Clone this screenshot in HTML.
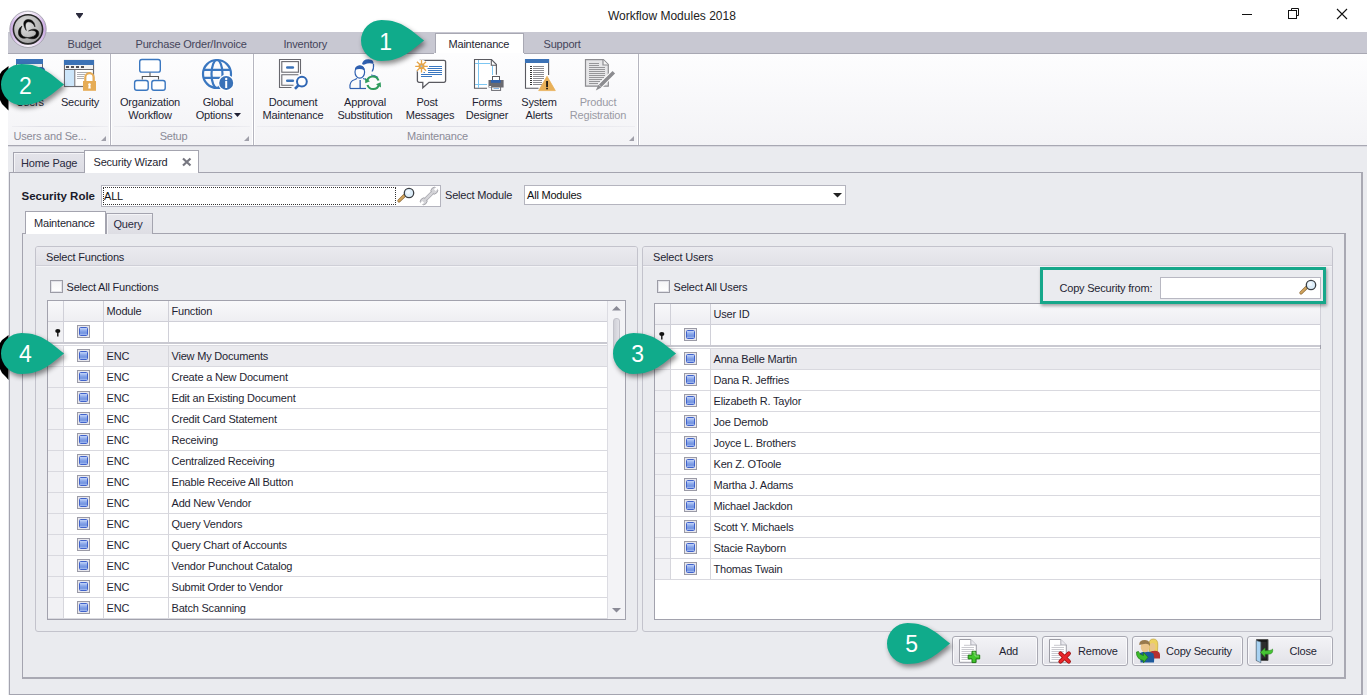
<!DOCTYPE html><html><head><meta charset="utf-8"><style>
*{box-sizing:border-box;margin:0;padding:0}
html,body{width:1367px;height:695px;overflow:hidden;background:#fff;font-family:"Liberation Sans",sans-serif;font-size:11px;color:#1f1f33}
.a{position:absolute}
.t{position:absolute;white-space:nowrap;line-height:13px;letter-spacing:-0.2px}
svg{position:absolute;overflow:visible}
</style></head><body>
<div class="t" style="left:608px;top:8px;font-size:12px;color:#222;line-height:16px;letter-spacing:0">Workflow Modules 2018</div>
<div class="a" style="left:76px;top:12.5px;width:7px;height:1px;background:#2b2b3d"></div>
<svg style="left:76px;top:14px" width="8" height="6"><path d="M0 0 L7 0 L3.5 4.8 Z" fill="#2b2b3d"/></svg>
<div class="a" style="left:1242px;top:14px;width:10px;height:1px;background:#111"></div>
<svg style="left:1288px;top:8px" width="12" height="12"><path d="M3.5 2.5 V0.5 H10.5 V7.5 H8.5" fill="none" stroke="#111" stroke-width="1"/><rect x="0.5" y="2.5" width="8" height="8" fill="none" stroke="#111" stroke-width="1"/></svg>
<svg style="left:1337px;top:9px" width="11" height="11"><path d="M0 0 L10 10 M10 0 L0 10" stroke="#111" stroke-width="1.1"/></svg>
<div class="a" style="left:8px;top:32px;width:1359px;height:22px;background:#c8c8d2;border-bottom:1px solid #a8a8b3"></div>
<div class="a" style="left:435px;top:33px;width:89px;height:21px;background:#fff;border:1px solid #a8a8b3;border-bottom:none"></div>
<div class="t" style="left:67.5px;top:38px;color:#45455a">Budget</div>
<div class="t" style="left:135.5px;top:38px;color:#45455a">Purchase Order/Invoice</div>
<div class="t" style="left:283.5px;top:38px;color:#45455a">Inventory</div>
<div class="t" style="left:543.5px;top:38px;color:#45455a">Support</div>
<div class="t" style="left:448.5px;top:38px;color:#1f1f33">Maintenance</div>
<div class="a" style="left:8px;top:54px;width:1359px;height:92px;background:linear-gradient(#fdfdfe,#f3f3f6);border-bottom:1px solid #a8a8b3"></div>
<div class="a" style="left:434px;top:53px;width:90px;height:2px;background:#fdfdfe"></div>
<div class="a" style="left:109px;top:54px;width:1px;height:91px;background:#ffffff"></div>
<div class="a" style="left:110px;top:54px;width:1px;height:91px;background:#b6b6c0"></div>
<div class="a" style="left:111px;top:54px;width:1px;height:91px;background:#ffffff"></div>
<div class="a" style="left:252px;top:54px;width:1px;height:91px;background:#ffffff"></div>
<div class="a" style="left:253px;top:54px;width:1px;height:91px;background:#b6b6c0"></div>
<div class="a" style="left:254px;top:54px;width:1px;height:91px;background:#ffffff"></div>
<div class="a" style="left:637px;top:54px;width:1px;height:91px;background:#ffffff"></div>
<div class="a" style="left:638px;top:54px;width:1px;height:91px;background:#b6b6c0"></div>
<div class="a" style="left:639px;top:54px;width:1px;height:91px;background:#ffffff"></div>
<div class="a" style="left:12px;top:126px;width:96px;height:1px;background:linear-gradient(90deg,rgba(220,220,228,0.3),#e0e0e7 30%,#e0e0e7 70%,rgba(220,220,228,0.3))"></div>
<div class="a" style="left:114px;top:126px;width:136px;height:1px;background:linear-gradient(90deg,rgba(220,220,228,0.3),#e0e0e7 30%,#e0e0e7 70%,rgba(220,220,228,0.3))"></div>
<div class="a" style="left:257px;top:126px;width:378px;height:1px;background:linear-gradient(90deg,rgba(220,220,228,0.3),#e0e0e7 30%,#e0e0e7 70%,rgba(220,220,228,0.3))"></div>
<div class="t" style="left:13.5px;top:130px;color:#8b8b97">Users and Se...</div>
<div class="t" style="left:73.5px;top:130px;width:200px;text-align:center;color:#8b8b97">Setup</div>
<div class="t" style="left:337.5px;top:130px;width:200px;text-align:center;color:#8b8b97">Maintenance</div>
<svg style="left:101px;top:136px" width="6" height="6"><path d="M5 0 V5 H0 Z" fill="#a0a0aa"/></svg>
<svg style="left:244px;top:136px" width="6" height="6"><path d="M5 0 V5 H0 Z" fill="#a0a0aa"/></svg>
<svg style="left:629px;top:136px" width="6" height="6"><path d="M5 0 V5 H0 Z" fill="#a0a0aa"/></svg>
<div class="t" style="left:-70px;top:96px;width:200px;text-align:center;color:#1f1f33">Users</div>
<div class="t" style="left:-20px;top:96px;width:200px;text-align:center;color:#1f1f33">Security</div>
<div class="t" style="left:50px;top:96px;width:200px;text-align:center;color:#1f1f33">Organization</div>
<div class="t" style="left:50px;top:109px;width:200px;text-align:center;color:#1f1f33">Workflow</div>
<div class="t" style="left:118px;top:96px;width:200px;text-align:center;color:#1f1f33">Global</div>
<div class="t" style="left:114px;top:109px;width:200px;text-align:center;color:#1f1f33">Options</div>
<div class="t" style="left:193px;top:96px;width:200px;text-align:center;color:#1f1f33">Document</div>
<div class="t" style="left:193px;top:109px;width:200px;text-align:center;color:#1f1f33">Maintenance</div>
<div class="t" style="left:265px;top:96px;width:200px;text-align:center;color:#1f1f33">Approval</div>
<div class="t" style="left:265px;top:109px;width:200px;text-align:center;color:#1f1f33">Substitution</div>
<div class="t" style="left:327px;top:96px;width:200px;text-align:center;color:#1f1f33">Post</div>
<div class="t" style="left:330px;top:109px;width:200px;text-align:center;color:#1f1f33">Messages</div>
<div class="t" style="left:387px;top:96px;width:200px;text-align:center;color:#1f1f33">Forms</div>
<div class="t" style="left:387px;top:109px;width:200px;text-align:center;color:#1f1f33">Designer</div>
<div class="t" style="left:439px;top:96px;width:200px;text-align:center;color:#1f1f33">System</div>
<div class="t" style="left:439px;top:109px;width:200px;text-align:center;color:#1f1f33">Alerts</div>
<div class="t" style="left:498px;top:96px;width:200px;text-align:center;color:#9a9aa4">Product</div>
<div class="t" style="left:498px;top:109px;width:200px;text-align:center;color:#9a9aa4">Registration</div>
<svg style="left:234px;top:113px" width="7" height="4"><path d="M0 0 H7 L3.5 4 Z" fill="#1f1f33"/></svg>
<svg style="left:10px;top:55px" width="40" height="40" viewBox="0 0 40 40"><rect x="6.5" y="8.5" width="26" height="20" fill="#fff" stroke="#6a6a70" stroke-width="1"/><rect x="6" y="4" width="27" height="5" fill="#3b72b6"/><rect x="7" y="9" width="25" height="4" fill="#f0f0f0"/><circle cx="31" cy="16" r="4" fill="#2f5fae"/></svg>
<svg style="left:60px;top:55px" width="40" height="40" viewBox="0 0 40 40"><rect x="4.5" y="5.5" width="29" height="26" fill="#fff" stroke="#6a6a70" stroke-width="1.2"/><rect x="4" y="5" width="30" height="5" fill="#3b72b6"/><rect x="5" y="10" width="28" height="4" fill="#f1f1f1"/><g fill="#505058"><rect x="6" y="11" width="3" height="2"/><rect x="11" y="11" width="3" height="2"/><rect x="16" y="11" width="3" height="2"/><rect x="21" y="11" width="3" height="2"/></g><rect x="4.8" y="14" width="28.5" height="1" fill="#6a6a70"/><rect x="5" y="15" width="9.3" height="16" fill="#cde6fa"/><rect x="14.3" y="15" width="1" height="16.5" fill="#6a6a70"/><g stroke="#9a9aa0" stroke-width="0.8"><path d="M17 17.5H31M17 19.5H25M17 21.5H24M17 23.5H24"/></g><path d="M25.3 26 V22.5 A4.2 4.4 0 0 1 33.7 22.5 V26" fill="none" stroke="#e6ac56" stroke-width="2.2"/><rect x="23" y="26" width="13" height="9.8" fill="#e6ac56"/><path d="M29.5 28.2 a1.3 1.3 0 0 1 0.9 2.3 L30.8 33.5 H28.2 L28.6 30.5 a1.3 1.3 0 0 1 0.9 -2.3Z" fill="#fff"/></svg>
<svg style="left:130px;top:55px" width="40" height="40" viewBox="0 0 40 40"><g fill="#fff" stroke="#3a77c0" stroke-width="1.4"><rect x="9.7" y="4.5" width="20.6" height="12.6" rx="2.2"/><rect x="4.6" y="25.5" width="13.6" height="9.7" rx="2.2"/><rect x="21.8" y="25.5" width="13.4" height="9.7" rx="2.2"/></g><path d="M20 17.6V21.5M12.3 24.5V21.5H28.5V24.5" fill="none" stroke="#555" stroke-width="1.1"/></svg>
<svg style="left:198px;top:55px" width="40" height="40" viewBox="0 0 40 40"><g fill="none" stroke="#3a77c0" stroke-width="2.2"><circle cx="19" cy="19" r="14"/><ellipse cx="19" cy="19" rx="5.5" ry="14"/><path d="M5.5 14.8H32.5M5.5 22.8H32.5"/></g><circle cx="28.2" cy="27.9" r="8.2" fill="#fff"/><circle cx="28.2" cy="27.9" r="7" fill="#3a72b8"/><rect x="27.2" y="26" width="2" height="7" fill="#fff"/><circle cx="28.2" cy="24" r="1.2" fill="#fff"/></svg>
<svg style="left:274px;top:55px" width="40" height="40" viewBox="0 0 40 40"><path d="M17.5 32.5H5.5V4.5H26.5V19" fill="none" stroke="#68686e" stroke-width="1.1"/><rect x="7.8" y="6.6" width="16.6" height="10.6" fill="#fff" stroke="#68686e" stroke-width="1.1"/><path d="M19.5 30.3H7.8V19.8H24.4" fill="none" stroke="#68686e" stroke-width="1.1"/><rect x="12" y="11.2" width="8.1" height="2.6" rx="1.2" fill="#3a72b8"/><rect x="12" y="24.4" width="8.1" height="2.6" rx="1.2" fill="#3a72b8"/><circle cx="27.9" cy="26.6" r="6.2" fill="#fff"/><circle cx="27.9" cy="26.6" r="4.9" fill="none" stroke="#2f66b4" stroke-width="2"/><path d="M24.3 30.3L21 33.9" stroke="#2f66b4" stroke-width="2.6"/></svg>
<svg style="left:345px;top:55px" width="40" height="40" viewBox="0 0 40 40"><g fill="none" stroke="#2f60b0" stroke-width="1.2"><path d="M27 16.5 Q29 14 28.5 9 M26 20 Q30 20 33 22.5"/><path d="M5 33.5 Q4 26 10 24.5 L12 23.5 M18 23.5 L21 24.5"/><path d="M5 33.5 H21"/><ellipse cx="14.8" cy="17" rx="4.8" ry="6.2" fill="#fff"/></g><path d="M17 9 Q18 4 23.5 4.2 Q29 4.5 28.5 9 Q24 7.5 19.5 9.5 Q18.5 10 17 9Z" fill="#2f60b0"/><path d="M10 15 Q9.5 11 14.8 10.8 Q20 11 19.6 15.5 Q15 13 10 15Z" fill="#2f60b0"/><rect x="14.5" y="25" width="1.3" height="8" fill="#2f60b0"/><g fill="none" stroke="#2e9b5d" stroke-width="2.1"><path d="M22 26 A6 6 0 0 1 33.5 25.5"/><path d="M34 29.5 A6 6 0 0 1 22.5 30"/></g><path d="M20 23 L20.3 28.3 L25 26.3Z M36 32.5 L35.7 27.3 L31 29.2Z" fill="#2e9b5d"/></svg>
<svg style="left:412px;top:55px" width="40" height="40" viewBox="0 0 40 40"><path d="M7.5 5.3H32a1.6 1.6 0 0 1 1.6 1.6V25.7a1.6 1.6 0 0 1-1.6 1.6H17L10.8 32.7V27.3H7a1.6 1.6 0 0 1-1.6-1.6V6.9" fill="#fff" stroke="#5a5a60" stroke-width="1.3"/><g stroke="#3a77c0" stroke-width="1"><path d="M17 11.5H30M14.5 13.5H30M16 15.5H30M11 17.5H13M16 17.5H30M9 19.5H30M9 21.5H20"/></g><circle cx="9.5" cy="11.3" r="6.5" fill="#fff"/><g stroke="#e6a548" stroke-width="1.3"><path d="M9.5 5V17.6M3.2 11.3H15.8M5 6.8L14 15.8M14 6.8L5 15.8"/></g><circle cx="9.5" cy="11.3" r="3" fill="#e6a548"/><circle cx="9.5" cy="11.3" r="1" fill="#9cc0e0"/></svg>
<svg style="left:470px;top:55px" width="40" height="40" viewBox="0 0 40 40"><path d="M17 33.3H4.5V4.5H21.5L26.4 9.5V19.8" fill="#fff" stroke="#5a5a60" stroke-width="1.1"/><path d="M21.3 4.5V10.2H26.4" fill="none" stroke="#5a5a60" stroke-width="1.1"/><g stroke="#7cc6f2" stroke-width="1"><path d="M8.5 5V33M5 8.5H20M5 29.5H17M22.5 11V20"/></g><rect x="22.5" y="21.5" width="7" height="4" fill="#fff" stroke="#5a5a60" stroke-width="1"/><path d="M18.5 25H33.6V32.5H18.5Z" fill="#6a6a70"/><rect x="19.5" y="25" width="13" height="4" fill="#fff" opacity="0"/><rect x="21" y="25" width="9.7" height="2.8" fill="#2f62ae"/><rect x="19.2" y="31" width="2" height="1" fill="#fff"/><rect x="21.6" y="32" width="9" height="3.4" fill="#fff" stroke="#6a6a70" stroke-width="1"/><path d="M23.5 33.5H29" stroke="#6aa0d8" stroke-width="0.8"/></svg>
<svg style="left:520px;top:55px" width="40" height="40" viewBox="0 0 40 40"><path d="M18.5 33.3H5.5V4.5H28.6V20" fill="#fff" stroke="#5a5a60" stroke-width="1.1"/><rect x="5" y="4" width="24" height="4" fill="#3b72b6"/><rect x="10" y="11" width="2" height="1" fill="#333"/><rect x="13" y="11" width="11" height="1" fill="#8a8a90"/><rect x="10" y="13" width="2" height="1" fill="#333"/><rect x="13" y="13" width="11" height="1" fill="#8a8a90"/><rect x="10" y="15" width="2" height="1" fill="#333"/><rect x="13" y="15" width="11" height="1" fill="#8a8a90"/><rect x="10" y="17" width="2" height="1" fill="#333"/><rect x="13" y="17" width="11" height="1" fill="#8a8a90"/><rect x="10" y="19" width="2" height="1" fill="#333"/><rect x="13" y="19" width="11" height="1" fill="#8a8a90"/><rect x="10" y="21" width="2" height="1" fill="#333"/><rect x="13" y="21" width="11" height="1" fill="#8a8a90"/><rect x="10" y="23" width="2" height="1" fill="#333"/><rect x="13" y="23" width="11" height="1" fill="#8a8a90"/><rect x="10" y="25" width="2" height="1" fill="#333"/><rect x="13" y="25" width="9" height="1" fill="#8a8a90"/><rect x="10" y="27" width="2" height="1" fill="#333"/><rect x="13" y="27" width="9" height="1" fill="#8a8a90"/><rect x="10" y="29" width="2" height="1" fill="#333"/><rect x="13" y="29" width="9" height="1" fill="#8a8a90"/><path d="M27 21.3L35.3 35.6H18.7Z" fill="#e8b058" stroke="#e8b058" stroke-width="0.8" stroke-linejoin="round"/><rect x="26.2" y="26" width="1.7" height="6" fill="#111"/><rect x="26.2" y="32.8" width="1.7" height="1.5" fill="#111"/></svg>
<svg style="left:580px;top:55px" width="40" height="40" viewBox="0 0 40 40"><path d="M5.5 4.7H23.4L28.3 9.6V31.2H5.5Z" fill="#e6e6e8" stroke="#8c8c90" stroke-width="1.2"/><path d="M23 4.7V10H28.3" fill="#f4f4f4" stroke="#8c8c90" stroke-width="1.2"/><g stroke="#8c8c90" stroke-width="0.9"><path d="M9 8.5H19M9 10.5H19M9 12.5H25M9 14.5H25M9 16.5H25M9 18.5H25M9 20.5H25M9 22.5H24M9 24.5H22M9 26.5H20M9 28.5H18"/></g><path d="M33.8 17.2L20 31" stroke="#fff" stroke-width="5.5"/><path d="M33.8 17.2L20.2 30.8" stroke="#8c8c90" stroke-width="3.6"/><path d="M18.4 29.7L21.4 32.6L15.8 35.4Z" fill="#8c8c90"/></svg>
<svg style="left:8px;top:9px" width="40" height="40" viewBox="0 0 40 40"><defs><radialGradient id="lg1" cx="0.4" cy="0.35" r="0.7"><stop offset="0" stop-color="#e2e2e2"/><stop offset="0.6" stop-color="#bcbcbc"/><stop offset="1" stop-color="#9a9a9a"/></radialGradient><linearGradient id="lg2" x1="0" y1="0" x2="1" y2="0"><stop offset="0" stop-color="#c8a6e2"/><stop offset="0.2" stop-color="#e6d6f2"/><stop offset="0.5" stop-color="#faf6fc"/><stop offset="0.8" stop-color="#e4d2f0"/><stop offset="1" stop-color="#c6a4e0"/></linearGradient></defs><circle cx="20" cy="20.3" r="18.2" fill="url(#lg2)" stroke="#a2a2aa" stroke-width="0.9"/><circle cx="20" cy="20.3" r="14.6" fill="url(#lg1)" stroke="#262626" stroke-width="1.6"/><g fill="#0a0a0a" stroke="#0a0a0a" stroke-width="0.5"><path d="M18.3 21.5 C14.5 16 15 11 19.5 10.5 C24 10 27 13.5 27 18 C25.5 14.5 23 12.8 20.5 12.8 C17.5 13 16.6 16.5 18.3 21.5Z"/><path d="M14 17 C10.3 19 9.6 24 11.3 26.9 C13 29.5 17 29.9 19.5 28.5 C16.5 28.3 13.8 27.3 13 24.8 C12.3 22 12.8 19.5 14 17Z"/><path d="M20.5 22 C23 20.2 27 19.3 29.6 21.4 C31.8 23.5 30.8 27.4 28.1 28.9 C25.5 30.3 22 29.9 19.3 28.8 C22 28.3 25.3 27.8 27 26.4 C28.7 25 28.6 22.6 26.8 21.9 C24.8 21.1 22.5 21.2 20.5 22Z"/></g></svg>
<div class="a" style="left:8px;top:146px;width:1359px;height:549px;background:#eaebef"></div>
<div class="a" style="left:8px;top:146px;width:1359px;height:1px;background:#d9d9e0"></div>
<div class="a" style="left:13px;top:152px;width:72px;height:21px;background:linear-gradient(#e4e4ea,#dcdce3);border:1px solid #a4a4af;border-bottom:none;box-shadow:inset 1px 1px 0 #f4f4f7"></div>
<div class="t" style="left:21px;top:157px;color:#2a2a3e">Home Page</div>
<div class="a" style="left:9px;top:172px;width:1354px;height:523px;background:#eaebef;border:1px solid #a4a4af;border-right:2px solid #a9a9b3"></div>
<div class="a" style="left:84px;top:150px;width:115px;height:23px;background:#fff;border:1px solid #a4a4af;border-bottom:none"></div>
<div class="t" style="left:93.5px;top:155.5px;color:#1f1f33">Security Wizard</div>
<svg style="left:182px;top:158px" width="10" height="8"><path d="M1 0.5 L8.5 7.5 M8.5 0.5 L1 7.5" stroke="#777780" stroke-width="2.2"/></svg>
<div class="t" style="left:21.5px;top:190px;font-weight:bold;font-size:11.5px;color:#1a1a2a;letter-spacing:0">Security Role</div>
<div class="a" style="left:101px;top:185px;width:340px;height:22px;background:#fff;border:1px solid #b4b4be"></div>
<div class="a" style="left:103px;top:187px;width:293px;height:18px;border:1px dotted #333"></div>
<div class="t" style="left:104px;top:189.5px;color:#111">ALL</div>
<div class="t" style="left:445px;top:189px;color:#1f1f33">Select Module</div>
<div class="a" style="left:524px;top:185px;width:322px;height:20px;background:#fff;border:1px solid #b4b4be"></div>
<div class="t" style="left:527px;top:189px;color:#111">All Modules</div>
<svg style="left:833px;top:193px" width="9" height="5"><path d="M0 0 H9 L4.5 4.5 Z" fill="#222"/></svg>
<div class="a" style="left:22px;top:233px;width:1324px;height:446px;background:#eaebef;border:1px solid #a4a4af;border-right:2px solid #a9a9b3;border-bottom:2px solid #a9a9b3"></div>
<div class="a" style="left:106px;top:213px;width:47px;height:21px;background:linear-gradient(#e8e8ed,#dedee4);border:1px solid #a4a4af;border-bottom:none;box-shadow:inset 1px 1px 0 #f4f4f7"></div>
<div class="t" style="left:113.5px;top:217.5px;color:#2a2a3e">Query</div>
<div class="a" style="left:25px;top:211px;width:81px;height:23px;background:#fff;border:1px solid #a4a4af;border-bottom:none"></div>
<div class="t" style="left:34px;top:217px;color:#1f1f33">Maintenance</div>
<div class="a" style="left:35px;top:246px;width:603px;height:386px;background:#eaebef;border:1px solid #c3c3cc;border-radius:3px"></div>
<div class="a" style="left:36px;top:247px;width:601px;height:19px;background:linear-gradient(#eaeaef,#e1e1e7);border-bottom:1px solid #cfcfd7;border-radius:2px 2px 0 0"></div>
<div class="a" style="left:36px;top:266px;width:601px;height:1px;background:#f4f4f7"></div>
<div class="t" style="left:46px;top:251px;color:#1f1f33">Select Functions</div>
<div class="a" style="left:642px;top:246px;width:691px;height:386px;background:#eaebef;border:1px solid #c3c3cc;border-radius:3px"></div>
<div class="a" style="left:643px;top:247px;width:689px;height:19px;background:linear-gradient(#eaeaef,#e1e1e7);border-bottom:1px solid #cfcfd7;border-radius:2px 2px 0 0"></div>
<div class="a" style="left:643px;top:266px;width:689px;height:1px;background:#f4f4f7"></div>
<div class="t" style="left:653px;top:251px;color:#1f1f33">Select Users</div>
<div class="a" style="left:50px;top:280px;width:13px;height:13px;background:linear-gradient(#f4f4f6,#fff);border:1px solid #9c9ca6;box-shadow:inset 0 0 0 1px #e2e2e8"></div>
<div class="t" style="left:66.5px;top:280.5px;color:#1f1f33">Select All Functions</div>
<div class="a" style="left:657px;top:280px;width:13px;height:13px;background:linear-gradient(#f4f4f6,#fff);border:1px solid #9c9ca6;box-shadow:inset 0 0 0 1px #e2e2e8"></div>
<div class="t" style="left:673.5px;top:280.5px;color:#1f1f33">Select All Users</div>
<div class="a" style="left:47px;top:300px;width:579px;height:320px;background:#fff;border:1px solid #a2a2ad"></div>
<div class="a" style="left:48px;top:301px;width:559px;height:20px;background:linear-gradient(#f8f8fa,#eeeef2)"></div>
<div class="a" style="left:48px;top:321px;width:559px;height:1px;background:#cfcfd7"></div>
<div class="a" style="left:48px;top:342px;width:559px;height:2px;background:#c9c9d1"></div>
<div class="a" style="left:48px;top:344px;width:559px;height:1px;background:#fff"></div>
<div class="a" style="left:48px;top:345px;width:559px;height:1px;background:#dadae0"></div>
<div class="a" style="left:48px;top:322px;width:15px;height:20px;background:#f1f1f4"></div>
<div class="a" style="left:48px;top:346px;width:15px;height:272px;background:#f1f1f4"></div>
<div class="a" style="left:104px;top:346px;width:503px;height:20px;background:#ebebef"></div>
<div class="a" style="left:48px;top:366px;width:559px;height:1px;background:#d9d9df"></div>
<div class="a" style="left:48px;top:387px;width:559px;height:1px;background:#d9d9df"></div>
<div class="a" style="left:48px;top:408px;width:559px;height:1px;background:#d9d9df"></div>
<div class="a" style="left:48px;top:429px;width:559px;height:1px;background:#d9d9df"></div>
<div class="a" style="left:48px;top:450px;width:559px;height:1px;background:#d9d9df"></div>
<div class="a" style="left:48px;top:471px;width:559px;height:1px;background:#d9d9df"></div>
<div class="a" style="left:48px;top:492px;width:559px;height:1px;background:#d9d9df"></div>
<div class="a" style="left:48px;top:513px;width:559px;height:1px;background:#d9d9df"></div>
<div class="a" style="left:48px;top:534px;width:559px;height:1px;background:#d9d9df"></div>
<div class="a" style="left:48px;top:555px;width:559px;height:1px;background:#d9d9df"></div>
<div class="a" style="left:48px;top:576px;width:559px;height:1px;background:#d9d9df"></div>
<div class="a" style="left:48px;top:597px;width:559px;height:1px;background:#d9d9df"></div>
<div class="a" style="left:48px;top:618px;width:559px;height:1px;background:#d9d9df"></div>
<div class="a" style="left:63px;top:301px;width:1px;height:41px;background:#d0d0d8"></div>
<div class="a" style="left:63px;top:346px;width:1px;height:272px;background:#d6d6dc"></div>
<div class="a" style="left:103px;top:301px;width:1px;height:41px;background:#d0d0d8"></div>
<div class="a" style="left:103px;top:346px;width:1px;height:272px;background:#d6d6dc"></div>
<div class="a" style="left:168px;top:301px;width:1px;height:41px;background:#d0d0d8"></div>
<div class="a" style="left:168px;top:346px;width:1px;height:272px;background:#d6d6dc"></div>
<svg style="left:55px;top:329px" width="6" height="8"><ellipse cx="2.8" cy="2" rx="2.6" ry="1.9" fill="#111"/><rect x="2.1" y="3" width="1.4" height="4.5" fill="#111"/></svg>
<div class="t" style="left:106.5px;top:305px;">Module</div>
<div class="t" style="left:171.5px;top:305px;">Function</div>
<div class="a" style="left:77px;top:325px;width:13px;height:13px;background:#8a8a96;border:1px solid #9a9aa6;padding:1px"></div>
<div class="a" style="left:78px;top:326px;width:11px;height:11px;background:#e8e8ee"></div>
<div class="a" style="left:79px;top:327px;width:9px;height:9px;background:linear-gradient(#c2d3f8,#86a4e8 45%,#7394e0 75%,#a9bff2);border:1px solid #3f62cc;border-radius:1.5px"></div>
<div class="a" style="left:77px;top:349px;width:13px;height:13px;background:#8a8a96;border:1px solid #9a9aa6;padding:1px"></div>
<div class="a" style="left:78px;top:350px;width:11px;height:11px;background:#e8e8ee"></div>
<div class="a" style="left:79px;top:351px;width:9px;height:9px;background:linear-gradient(#c2d3f8,#86a4e8 45%,#7394e0 75%,#a9bff2);border:1px solid #3f62cc;border-radius:1.5px"></div>
<div class="t" style="left:106.5px;top:350px;">ENC</div>
<div class="t" style="left:171.5px;top:350px;">View My Documents</div>
<div class="a" style="left:77px;top:370px;width:13px;height:13px;background:#8a8a96;border:1px solid #9a9aa6;padding:1px"></div>
<div class="a" style="left:78px;top:371px;width:11px;height:11px;background:#e8e8ee"></div>
<div class="a" style="left:79px;top:372px;width:9px;height:9px;background:linear-gradient(#c2d3f8,#86a4e8 45%,#7394e0 75%,#a9bff2);border:1px solid #3f62cc;border-radius:1.5px"></div>
<div class="t" style="left:106.5px;top:371px;">ENC</div>
<div class="t" style="left:171.5px;top:371px;">Create a New Document</div>
<div class="a" style="left:77px;top:391px;width:13px;height:13px;background:#8a8a96;border:1px solid #9a9aa6;padding:1px"></div>
<div class="a" style="left:78px;top:392px;width:11px;height:11px;background:#e8e8ee"></div>
<div class="a" style="left:79px;top:393px;width:9px;height:9px;background:linear-gradient(#c2d3f8,#86a4e8 45%,#7394e0 75%,#a9bff2);border:1px solid #3f62cc;border-radius:1.5px"></div>
<div class="t" style="left:106.5px;top:392px;">ENC</div>
<div class="t" style="left:171.5px;top:392px;">Edit an Existing Document</div>
<div class="a" style="left:77px;top:412px;width:13px;height:13px;background:#8a8a96;border:1px solid #9a9aa6;padding:1px"></div>
<div class="a" style="left:78px;top:413px;width:11px;height:11px;background:#e8e8ee"></div>
<div class="a" style="left:79px;top:414px;width:9px;height:9px;background:linear-gradient(#c2d3f8,#86a4e8 45%,#7394e0 75%,#a9bff2);border:1px solid #3f62cc;border-radius:1.5px"></div>
<div class="t" style="left:106.5px;top:413px;">ENC</div>
<div class="t" style="left:171.5px;top:413px;">Credit Card Statement</div>
<div class="a" style="left:77px;top:433px;width:13px;height:13px;background:#8a8a96;border:1px solid #9a9aa6;padding:1px"></div>
<div class="a" style="left:78px;top:434px;width:11px;height:11px;background:#e8e8ee"></div>
<div class="a" style="left:79px;top:435px;width:9px;height:9px;background:linear-gradient(#c2d3f8,#86a4e8 45%,#7394e0 75%,#a9bff2);border:1px solid #3f62cc;border-radius:1.5px"></div>
<div class="t" style="left:106.5px;top:434px;">ENC</div>
<div class="t" style="left:171.5px;top:434px;">Receiving</div>
<div class="a" style="left:77px;top:454px;width:13px;height:13px;background:#8a8a96;border:1px solid #9a9aa6;padding:1px"></div>
<div class="a" style="left:78px;top:455px;width:11px;height:11px;background:#e8e8ee"></div>
<div class="a" style="left:79px;top:456px;width:9px;height:9px;background:linear-gradient(#c2d3f8,#86a4e8 45%,#7394e0 75%,#a9bff2);border:1px solid #3f62cc;border-radius:1.5px"></div>
<div class="t" style="left:106.5px;top:455px;">ENC</div>
<div class="t" style="left:171.5px;top:455px;">Centralized Receiving</div>
<div class="a" style="left:77px;top:475px;width:13px;height:13px;background:#8a8a96;border:1px solid #9a9aa6;padding:1px"></div>
<div class="a" style="left:78px;top:476px;width:11px;height:11px;background:#e8e8ee"></div>
<div class="a" style="left:79px;top:477px;width:9px;height:9px;background:linear-gradient(#c2d3f8,#86a4e8 45%,#7394e0 75%,#a9bff2);border:1px solid #3f62cc;border-radius:1.5px"></div>
<div class="t" style="left:106.5px;top:476px;">ENC</div>
<div class="t" style="left:171.5px;top:476px;">Enable Receive All Button</div>
<div class="a" style="left:77px;top:496px;width:13px;height:13px;background:#8a8a96;border:1px solid #9a9aa6;padding:1px"></div>
<div class="a" style="left:78px;top:497px;width:11px;height:11px;background:#e8e8ee"></div>
<div class="a" style="left:79px;top:498px;width:9px;height:9px;background:linear-gradient(#c2d3f8,#86a4e8 45%,#7394e0 75%,#a9bff2);border:1px solid #3f62cc;border-radius:1.5px"></div>
<div class="t" style="left:106.5px;top:497px;">ENC</div>
<div class="t" style="left:171.5px;top:497px;">Add New Vendor</div>
<div class="a" style="left:77px;top:517px;width:13px;height:13px;background:#8a8a96;border:1px solid #9a9aa6;padding:1px"></div>
<div class="a" style="left:78px;top:518px;width:11px;height:11px;background:#e8e8ee"></div>
<div class="a" style="left:79px;top:519px;width:9px;height:9px;background:linear-gradient(#c2d3f8,#86a4e8 45%,#7394e0 75%,#a9bff2);border:1px solid #3f62cc;border-radius:1.5px"></div>
<div class="t" style="left:106.5px;top:518px;">ENC</div>
<div class="t" style="left:171.5px;top:518px;">Query Vendors</div>
<div class="a" style="left:77px;top:538px;width:13px;height:13px;background:#8a8a96;border:1px solid #9a9aa6;padding:1px"></div>
<div class="a" style="left:78px;top:539px;width:11px;height:11px;background:#e8e8ee"></div>
<div class="a" style="left:79px;top:540px;width:9px;height:9px;background:linear-gradient(#c2d3f8,#86a4e8 45%,#7394e0 75%,#a9bff2);border:1px solid #3f62cc;border-radius:1.5px"></div>
<div class="t" style="left:106.5px;top:539px;">ENC</div>
<div class="t" style="left:171.5px;top:539px;">Query Chart of Accounts</div>
<div class="a" style="left:77px;top:559px;width:13px;height:13px;background:#8a8a96;border:1px solid #9a9aa6;padding:1px"></div>
<div class="a" style="left:78px;top:560px;width:11px;height:11px;background:#e8e8ee"></div>
<div class="a" style="left:79px;top:561px;width:9px;height:9px;background:linear-gradient(#c2d3f8,#86a4e8 45%,#7394e0 75%,#a9bff2);border:1px solid #3f62cc;border-radius:1.5px"></div>
<div class="t" style="left:106.5px;top:560px;">ENC</div>
<div class="t" style="left:171.5px;top:560px;">Vendor Punchout Catalog</div>
<div class="a" style="left:77px;top:580px;width:13px;height:13px;background:#8a8a96;border:1px solid #9a9aa6;padding:1px"></div>
<div class="a" style="left:78px;top:581px;width:11px;height:11px;background:#e8e8ee"></div>
<div class="a" style="left:79px;top:582px;width:9px;height:9px;background:linear-gradient(#c2d3f8,#86a4e8 45%,#7394e0 75%,#a9bff2);border:1px solid #3f62cc;border-radius:1.5px"></div>
<div class="t" style="left:106.5px;top:581px;">ENC</div>
<div class="t" style="left:171.5px;top:581px;">Submit Order to Vendor</div>
<div class="a" style="left:77px;top:601px;width:13px;height:13px;background:#8a8a96;border:1px solid #9a9aa6;padding:1px"></div>
<div class="a" style="left:78px;top:602px;width:11px;height:11px;background:#e8e8ee"></div>
<div class="a" style="left:79px;top:603px;width:9px;height:9px;background:linear-gradient(#c2d3f8,#86a4e8 45%,#7394e0 75%,#a9bff2);border:1px solid #3f62cc;border-radius:1.5px"></div>
<div class="t" style="left:106.5px;top:602px;">ENC</div>
<div class="t" style="left:171.5px;top:602px;">Batch Scanning</div>
<div class="a" style="left:607px;top:301px;width:18px;height:318px;background:#f3f3f6;border-left:1px solid #dcdce2"></div>
<svg style="left:612px;top:306px" width="9" height="5"><path d="M0 4.5 H9 L4.5 0 Z" fill="#8a8a96"/></svg>
<svg style="left:612px;top:608px" width="9" height="5"><path d="M0 0 H9 L4.5 4.5 Z" fill="#8a8a96"/></svg>
<div class="a" style="left:613px;top:318px;width:7px;height:36px;background:linear-gradient(90deg,#cfcfd6,#e2e2e8);border:1px solid #c2c2ca;border-radius:3px"></div>
<div class="a" style="left:654px;top:303px;width:667px;height:317px;background:#fff;border:1px solid #a2a2ad"></div>
<div class="a" style="left:655px;top:304px;width:665px;height:20px;background:linear-gradient(#f8f8fa,#eeeef2)"></div>
<div class="a" style="left:655px;top:324px;width:665px;height:1px;background:#cfcfd7"></div>
<div class="a" style="left:655px;top:345px;width:665px;height:2px;background:#c9c9d1"></div>
<div class="a" style="left:655px;top:347px;width:665px;height:1px;background:#fff"></div>
<div class="a" style="left:655px;top:348px;width:665px;height:1px;background:#dadae0"></div>
<div class="a" style="left:655px;top:325px;width:15px;height:20px;background:#f1f1f4"></div>
<div class="a" style="left:655px;top:349px;width:15px;height:230px;background:#f1f1f4"></div>
<div class="a" style="left:711px;top:349px;width:609px;height:20px;background:#ebebef"></div>
<div class="a" style="left:655px;top:369px;width:665px;height:1px;background:#d9d9df"></div>
<div class="a" style="left:655px;top:390px;width:665px;height:1px;background:#d9d9df"></div>
<div class="a" style="left:655px;top:411px;width:665px;height:1px;background:#d9d9df"></div>
<div class="a" style="left:655px;top:432px;width:665px;height:1px;background:#d9d9df"></div>
<div class="a" style="left:655px;top:453px;width:665px;height:1px;background:#d9d9df"></div>
<div class="a" style="left:655px;top:474px;width:665px;height:1px;background:#d9d9df"></div>
<div class="a" style="left:655px;top:495px;width:665px;height:1px;background:#d9d9df"></div>
<div class="a" style="left:655px;top:516px;width:665px;height:1px;background:#d9d9df"></div>
<div class="a" style="left:655px;top:537px;width:665px;height:1px;background:#d9d9df"></div>
<div class="a" style="left:655px;top:558px;width:665px;height:1px;background:#d9d9df"></div>
<div class="a" style="left:655px;top:579px;width:665px;height:1px;background:#d9d9df"></div>
<div class="a" style="left:670px;top:304px;width:1px;height:41px;background:#d0d0d8"></div>
<div class="a" style="left:670px;top:349px;width:1px;height:230px;background:#d6d6dc"></div>
<div class="a" style="left:710px;top:304px;width:1px;height:41px;background:#d0d0d8"></div>
<div class="a" style="left:710px;top:349px;width:1px;height:230px;background:#d6d6dc"></div>
<div class="a" style="left:1320px;top:304px;width:1px;height:41px;background:#d0d0d8"></div>
<div class="a" style="left:1320px;top:349px;width:1px;height:230px;background:#d6d6dc"></div>
<svg style="left:659px;top:332px" width="6" height="8"><ellipse cx="2.8" cy="2" rx="2.6" ry="1.9" fill="#111"/><rect x="2.1" y="3" width="1.4" height="4.5" fill="#111"/></svg>
<div class="t" style="left:713.5px;top:308px;">User ID</div>
<div class="a" style="left:684px;top:328px;width:13px;height:13px;background:#8a8a96;border:1px solid #9a9aa6;padding:1px"></div>
<div class="a" style="left:685px;top:329px;width:11px;height:11px;background:#e8e8ee"></div>
<div class="a" style="left:686px;top:330px;width:9px;height:9px;background:linear-gradient(#c2d3f8,#86a4e8 45%,#7394e0 75%,#a9bff2);border:1px solid #3f62cc;border-radius:1.5px"></div>
<div class="a" style="left:684px;top:352px;width:13px;height:13px;background:#8a8a96;border:1px solid #9a9aa6;padding:1px"></div>
<div class="a" style="left:685px;top:353px;width:11px;height:11px;background:#e8e8ee"></div>
<div class="a" style="left:686px;top:354px;width:9px;height:9px;background:linear-gradient(#c2d3f8,#86a4e8 45%,#7394e0 75%,#a9bff2);border:1px solid #3f62cc;border-radius:1.5px"></div>
<div class="t" style="left:713.5px;top:353px;">Anna Belle Martin</div>
<div class="a" style="left:684px;top:373px;width:13px;height:13px;background:#8a8a96;border:1px solid #9a9aa6;padding:1px"></div>
<div class="a" style="left:685px;top:374px;width:11px;height:11px;background:#e8e8ee"></div>
<div class="a" style="left:686px;top:375px;width:9px;height:9px;background:linear-gradient(#c2d3f8,#86a4e8 45%,#7394e0 75%,#a9bff2);border:1px solid #3f62cc;border-radius:1.5px"></div>
<div class="t" style="left:713.5px;top:374px;">Dana R. Jeffries</div>
<div class="a" style="left:684px;top:394px;width:13px;height:13px;background:#8a8a96;border:1px solid #9a9aa6;padding:1px"></div>
<div class="a" style="left:685px;top:395px;width:11px;height:11px;background:#e8e8ee"></div>
<div class="a" style="left:686px;top:396px;width:9px;height:9px;background:linear-gradient(#c2d3f8,#86a4e8 45%,#7394e0 75%,#a9bff2);border:1px solid #3f62cc;border-radius:1.5px"></div>
<div class="t" style="left:713.5px;top:395px;">Elizabeth R. Taylor</div>
<div class="a" style="left:684px;top:415px;width:13px;height:13px;background:#8a8a96;border:1px solid #9a9aa6;padding:1px"></div>
<div class="a" style="left:685px;top:416px;width:11px;height:11px;background:#e8e8ee"></div>
<div class="a" style="left:686px;top:417px;width:9px;height:9px;background:linear-gradient(#c2d3f8,#86a4e8 45%,#7394e0 75%,#a9bff2);border:1px solid #3f62cc;border-radius:1.5px"></div>
<div class="t" style="left:713.5px;top:416px;">Joe Demob</div>
<div class="a" style="left:684px;top:436px;width:13px;height:13px;background:#8a8a96;border:1px solid #9a9aa6;padding:1px"></div>
<div class="a" style="left:685px;top:437px;width:11px;height:11px;background:#e8e8ee"></div>
<div class="a" style="left:686px;top:438px;width:9px;height:9px;background:linear-gradient(#c2d3f8,#86a4e8 45%,#7394e0 75%,#a9bff2);border:1px solid #3f62cc;border-radius:1.5px"></div>
<div class="t" style="left:713.5px;top:437px;">Joyce L. Brothers</div>
<div class="a" style="left:684px;top:457px;width:13px;height:13px;background:#8a8a96;border:1px solid #9a9aa6;padding:1px"></div>
<div class="a" style="left:685px;top:458px;width:11px;height:11px;background:#e8e8ee"></div>
<div class="a" style="left:686px;top:459px;width:9px;height:9px;background:linear-gradient(#c2d3f8,#86a4e8 45%,#7394e0 75%,#a9bff2);border:1px solid #3f62cc;border-radius:1.5px"></div>
<div class="t" style="left:713.5px;top:458px;">Ken Z. OToole</div>
<div class="a" style="left:684px;top:478px;width:13px;height:13px;background:#8a8a96;border:1px solid #9a9aa6;padding:1px"></div>
<div class="a" style="left:685px;top:479px;width:11px;height:11px;background:#e8e8ee"></div>
<div class="a" style="left:686px;top:480px;width:9px;height:9px;background:linear-gradient(#c2d3f8,#86a4e8 45%,#7394e0 75%,#a9bff2);border:1px solid #3f62cc;border-radius:1.5px"></div>
<div class="t" style="left:713.5px;top:479px;">Martha J. Adams</div>
<div class="a" style="left:684px;top:499px;width:13px;height:13px;background:#8a8a96;border:1px solid #9a9aa6;padding:1px"></div>
<div class="a" style="left:685px;top:500px;width:11px;height:11px;background:#e8e8ee"></div>
<div class="a" style="left:686px;top:501px;width:9px;height:9px;background:linear-gradient(#c2d3f8,#86a4e8 45%,#7394e0 75%,#a9bff2);border:1px solid #3f62cc;border-radius:1.5px"></div>
<div class="t" style="left:713.5px;top:500px;">Michael Jackdon</div>
<div class="a" style="left:684px;top:520px;width:13px;height:13px;background:#8a8a96;border:1px solid #9a9aa6;padding:1px"></div>
<div class="a" style="left:685px;top:521px;width:11px;height:11px;background:#e8e8ee"></div>
<div class="a" style="left:686px;top:522px;width:9px;height:9px;background:linear-gradient(#c2d3f8,#86a4e8 45%,#7394e0 75%,#a9bff2);border:1px solid #3f62cc;border-radius:1.5px"></div>
<div class="t" style="left:713.5px;top:521px;">Scott Y. Michaels</div>
<div class="a" style="left:684px;top:541px;width:13px;height:13px;background:#8a8a96;border:1px solid #9a9aa6;padding:1px"></div>
<div class="a" style="left:685px;top:542px;width:11px;height:11px;background:#e8e8ee"></div>
<div class="a" style="left:686px;top:543px;width:9px;height:9px;background:linear-gradient(#c2d3f8,#86a4e8 45%,#7394e0 75%,#a9bff2);border:1px solid #3f62cc;border-radius:1.5px"></div>
<div class="t" style="left:713.5px;top:542px;">Stacie Rayborn</div>
<div class="a" style="left:684px;top:562px;width:13px;height:13px;background:#8a8a96;border:1px solid #9a9aa6;padding:1px"></div>
<div class="a" style="left:685px;top:563px;width:11px;height:11px;background:#e8e8ee"></div>
<div class="a" style="left:686px;top:564px;width:9px;height:9px;background:linear-gradient(#c2d3f8,#86a4e8 45%,#7394e0 75%,#a9bff2);border:1px solid #3f62cc;border-radius:1.5px"></div>
<div class="t" style="left:713.5px;top:563px;">Thomas Twain</div>
<div class="a" style="left:1040px;top:267px;width:286px;height:37px;border:3px solid #16a78a;box-shadow:1px 2px 3px rgba(0,0,0,0.35)"></div>
<div class="t" style="left:1059.5px;top:282px;">Copy Security from:</div>
<div class="a" style="left:1160px;top:277px;width:161px;height:22px;background:#fff;border:1px solid #b8b8c2"></div>
<div class="a" style="left:952px;top:636px;width:86px;height:30px;background:linear-gradient(#f3f3f6,#e2e2e8);border:1px solid #a9a9b3;border-radius:3px;box-shadow:inset 0 0 0 1px #fafafc"></div>
<div class="t" style="left:999px;top:645px;">Add</div>
<div class="a" style="left:1042px;top:636px;width:86px;height:30px;background:linear-gradient(#f3f3f6,#e2e2e8);border:1px solid #a9a9b3;border-radius:3px;box-shadow:inset 0 0 0 1px #fafafc"></div>
<div class="t" style="left:1078px;top:645px;">Remove</div>
<div class="a" style="left:1132px;top:636px;width:111px;height:30px;background:linear-gradient(#f3f3f6,#e2e2e8);border:1px solid #a9a9b3;border-radius:3px;box-shadow:inset 0 0 0 1px #fafafc"></div>
<div class="t" style="left:1166px;top:645px;">Copy Security</div>
<div class="a" style="left:1247px;top:636px;width:86px;height:30px;background:linear-gradient(#f3f3f6,#e2e2e8);border:1px solid #a9a9b3;border-radius:3px;box-shadow:inset 0 0 0 1px #fafafc"></div>
<div class="t" style="left:1289.5px;top:645px;">Close</div>
<svg style="left:1299.4px;top:277.2px" width="20" height="18"><path d="M7.5 10.5 L2 15.8" stroke="#8a6430" stroke-width="3.2" stroke-linecap="round"/><path d="M7.5 10.5 L2 15.8" stroke="#d0a45e" stroke-width="2" stroke-linecap="round"/><circle cx="12" cy="8" r="4.7" fill="#dcedf9" stroke="#3b3f44" stroke-width="1.3"/><circle cx="11.2" cy="7" r="2" fill="#f2f8fd"/></svg>
<svg style="left:397.4px;top:185.2px" width="20" height="18"><path d="M7.5 10.5 L2 15.8" stroke="#8a6430" stroke-width="3.2" stroke-linecap="round"/><path d="M7.5 10.5 L2 15.8" stroke="#d0a45e" stroke-width="2" stroke-linecap="round"/><circle cx="12" cy="8" r="4.7" fill="#dcedf9" stroke="#3b3f44" stroke-width="1.3"/><circle cx="11.2" cy="7" r="2" fill="#f2f8fd"/></svg>
<svg style="left:418px;top:185px" width="22" height="22"><g transform="translate(11,11) rotate(-45)" fill="#d4d4d8" stroke="#9a9aa0" stroke-width="0.8"><rect x="-6" y="-1.6" width="12" height="3.2"/><circle cx="-7.5" cy="0" r="3.3"/><circle cx="7.5" cy="0" r="3.3"/><rect x="-6" y="-1" width="12" height="2" stroke="none"/><path d="M-11.5 -1.3H-8.2V1.3H-11.5Z M11.5 -1.3H8.2V1.3H11.5Z" fill="#fff" stroke="none"/></g></svg>
<svg style="left:955px;top:635px" width="30" height="32" viewBox="0 0 30 32"><path d="M4.5 4.5H15.8L21.3 10V27.3H4.5Z" fill="#fff" stroke="#9c9ca4" stroke-width="1"/><path d="M15.8 4.5V10H21.3" fill="#e8e8ee" stroke="#9c9ca4" stroke-width="0.8"/><g stroke="#c4c4ca" stroke-width="0.9"><path d="M9 10.3H16M6.5 12.5H19M6.5 14.5H19M6.5 16.5H19M6.5 18.5H17M6.5 20.5H16M6.5 22.5H15M6.5 24.5H15"/></g><path d="M17 16.3H20.9V20.1H24.7V23.9H20.9V27.6H17V23.9H13.2V20.1H17Z" fill="#3fc52a" stroke="#1f7a12" stroke-width="1"/><path d="M17.8 17.2H20V21H23.8" fill="none" stroke="#9be48a" stroke-width="0.8"/></svg>
<svg style="left:1045px;top:635px" width="30" height="32" viewBox="0 0 30 32"><path d="M4.5 4.5H15.8L21.3 10V27.3H4.5Z" fill="#fff" stroke="#9c9ca4" stroke-width="1"/><path d="M15.8 4.5V10H21.3" fill="#e8e8ee" stroke="#9c9ca4" stroke-width="0.8"/><g stroke="#c4c4ca" stroke-width="0.9"><path d="M9 10.3H16M6.5 12.5H19M6.5 14.5H19M6.5 16.5H19M6.5 18.5H17M6.5 20.5H16M6.5 22.5H15M6.5 24.5H15"/></g><g stroke-linecap="round"><path d="M15.5 18.5L23.8 26.5M23.8 18.5L15.5 26.5" stroke="#9c1010" stroke-width="4.2"/><path d="M15.5 18.5L23.8 26.5M23.8 18.5L15.5 26.5" stroke="#e8262a" stroke-width="2.6"/></g></svg>
<svg style="left:1135px;top:635px" width="30" height="32" viewBox="0 0 30 32"><path d="M14 9 Q14 4 18.5 4 Q23 4 22.8 10 L22.5 16.5 H14.2Z" fill="#ecd160" stroke="#b89a30" stroke-width="0.6"/><path d="M15 17 Q18.5 15 22 16 Q25 17 25 20 V23.5 H14Z" fill="#b43030"/><ellipse cx="17.5" cy="12" rx="3" ry="4" fill="#e9c58a"/><path d="M5 18 Q12 15 18.5 18.5 Q19.5 22 19 27.5 H5.5Z" fill="#1e5a9c"/><ellipse cx="10" cy="12" rx="4.3" ry="5.3" fill="#ebc58c"/><path d="M4.2 10 Q4 5 10 5 Q15.5 5.3 15 11 Q13 8 9 9 Q6 9.5 4.2 10Z" fill="#98794c"/><path d="M1.5 17 Q1 24 8.5 25.5 V27.8 L13 22.3 L8.5 17.5 V20.5 Q4.5 20 3.5 16.5Z" fill="#3dbb2c" stroke="#1d7a12" stroke-width="0.7"/></svg>
<svg style="left:1250px;top:635px" width="30" height="32" viewBox="0 0 30 32"><path d="M6.5 4.5H18V25.5H6.5Z" fill="#1a1a1a" stroke="#555" stroke-width="1"/><path d="M8.5 7H16.5V23.5H8.5Z" fill="#2c2c2c"/><path d="M6.2 5.5L10.8 7V27.8L6.2 25.5Z" fill="#a8d2f2" stroke="#5a6a78" stroke-width="0.7"/><path d="M22.5 14 Q23.5 18 20 19 L15 19.2 V22 L10.5 17.3 L15 13 V15.8 L19.5 15.5 Q21.8 15.3 22.5 14Z" fill="#46c434" stroke="#2a8a1e" stroke-width="0.6"/></svg>
<svg style="left:0;top:0" width="9" height="400"><path d="M8.5 66 L8.5 110.5 L6 108 L2 104 L0 100 L0 74 L2 71 L6 68 Z" fill="#000"/><path d="M8.5 335 L8.5 380 L6 377 L2 373 L0 369 L0 343 L2 340 L6 337 Z" fill="#000"/></svg>
<svg style="left:353.00px;top:12.30px;filter:drop-shadow(2px 3px 2.5px rgba(0,0,0,0.45))" width="83" height="61"><path d="M71.10 28.50 C59.10 19.50 49.50 8.00 28.50 8.00 A20.5 20.5 0 0 0 28.50 49.00 C49.50 49.00 59.10 37.50 71.10 28.50 Z" fill="#10ab8b"/></svg>
<div class="t" style="left:365.70px;top:27.50px;width:40px;text-align:center;font-size:23px;line-height:28px;color:#fff;letter-spacing:0">1</div>
<svg style="left:-7.20px;top:56.30px;filter:drop-shadow(2px 3px 2.5px rgba(0,0,0,0.45))" width="83" height="61"><path d="M71.10 28.50 C59.10 19.50 49.50 8.00 28.50 8.00 A20.5 20.5 0 0 0 28.50 49.00 C49.50 49.00 59.10 37.50 71.10 28.50 Z" fill="#10ab8b"/></svg>
<div class="t" style="left:5.50px;top:71.50px;width:40px;text-align:center;font-size:23px;line-height:28px;color:#fff;letter-spacing:0">2</div>
<svg style="left:605.00px;top:325.00px;filter:drop-shadow(2px 3px 2.5px rgba(0,0,0,0.45))" width="83" height="61"><path d="M71.10 28.50 C59.10 19.50 49.50 8.00 28.50 8.00 A20.5 20.5 0 0 0 28.50 49.00 C49.50 49.00 59.10 37.50 71.10 28.50 Z" fill="#10ab8b"/></svg>
<div class="t" style="left:617.70px;top:340.20px;width:40px;text-align:center;font-size:23px;line-height:28px;color:#fff;letter-spacing:0">3</div>
<svg style="left:-7.20px;top:325.00px;filter:drop-shadow(2px 3px 2.5px rgba(0,0,0,0.45))" width="83" height="61"><path d="M71.10 28.50 C59.10 19.50 49.50 8.00 28.50 8.00 A20.5 20.5 0 0 0 28.50 49.00 C49.50 49.00 59.10 37.50 71.10 28.50 Z" fill="#10ab8b"/></svg>
<div class="t" style="left:5.50px;top:340.20px;width:40px;text-align:center;font-size:23px;line-height:28px;color:#fff;letter-spacing:0">4</div>
<svg style="left:878.90px;top:615.00px;filter:drop-shadow(2px 3px 2.5px rgba(0,0,0,0.45))" width="83" height="61"><path d="M71.10 28.50 C59.10 19.50 49.50 8.00 28.50 8.00 A20.5 20.5 0 0 0 28.50 49.00 C49.50 49.00 59.10 37.50 71.10 28.50 Z" fill="#10ab8b"/></svg>
<div class="t" style="left:891.60px;top:630.20px;width:40px;text-align:center;font-size:23px;line-height:28px;color:#fff;letter-spacing:0">5</div>
</body></html>
